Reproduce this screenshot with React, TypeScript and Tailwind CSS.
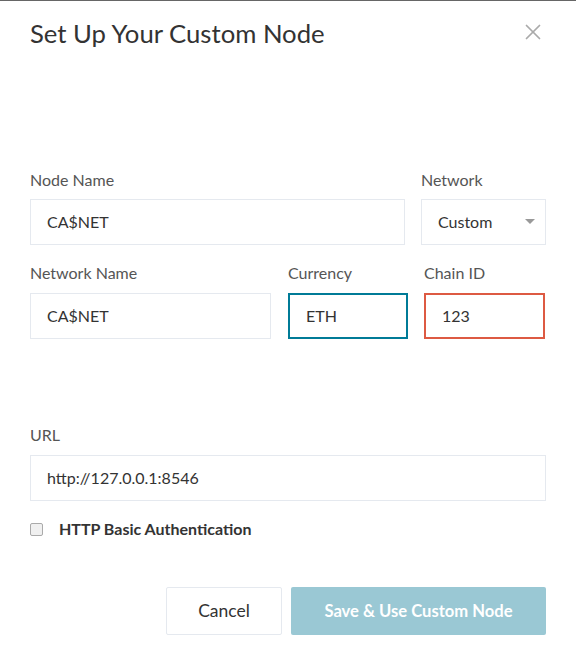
import { X } from "lucide-react"

export default function App() {
  const inputBase =
    "h-[46px] w-full bg-white px-[16px] text-[16px] text-[#333] outline-none flex items-center"
  const labelCls = "block text-[16px] leading-[20px] text-[#555]"

  return (
    <div className="w-[576px] h-[648px] bg-white border-t border-[#666] font-['Lato','Liberation_Sans',sans-serif] text-[#333] overflow-hidden">
      {/* HEADER */}
      <div className="flex items-center justify-between pl-[30px] pr-[30px] pt-[13px] h-[50px]">
        <h1 className="text-[25.7px] leading-[34px] font-normal text-[#333]">Set Up Your Custom Node</h1>
        <X size={26} strokeWidth={1.6} className="text-[#aaa] -mt-[2px]" />
      </div>

      {/* FORM */}
      <div className="px-[30px] pt-[119px]">
        {/* Row 1 */}
        <div className="grid grid-cols-[375px_125px] gap-x-[16px]">
          <div>
            <label className={`${labelCls} mb-[9px]`}>Node Name</label>
            <div className={`${inputBase} border border-[#e5e9ef]`}>CA$NET</div>
          </div>
          <div>
            <label className={`${labelCls} mb-[9px]`}>Network</label>
            <div className={`${inputBase} border border-[#e5e9ef] justify-between pr-[10px]`}>
              <span>Custom</span>
              <svg width="10" height="6" viewBox="0 0 10 6">
                <path d="M0 0 L10 0 L5 5 Z" fill="#999" />
              </svg>
            </div>
          </div>
        </div>

        {/* Row 2 */}
        <div className="grid grid-cols-[241px_121px_121px] gap-x-[16px] mt-[18px]">
          <div>
            <label className={`${labelCls} mb-[10px]`}>Network Name</label>
            <div className={`${inputBase} border border-[#e5e9ef]`}>CA$NET</div>
          </div>
          <div className="ml-[1px]">
            <label className={`${labelCls} mb-[10px]`}>Currency</label>
            <div className={`${inputBase} border-2 border-[#007b97]`}>ETH</div>
          </div>
          <div>
            <label className={`${labelCls} mb-[10px]`}>Chain ID</label>
            <div className={`${inputBase} border-2 border-[#dd5a43]`}>123</div>
          </div>
        </div>

        {/* URL */}
        <div className="mt-[86px]">
          <label className={`${labelCls} mb-[10px]`}>URL</label>
          <div className={`${inputBase} border border-[#e5e9ef]`}>http://127.0.0.1:8546</div>
        </div>

        {/* Checkbox */}
        <div className="flex items-center mt-[18px] h-[20px]">
          <span className="w-[13px] h-[13px] rounded-[2px] border border-[#aaa] bg-[#f0f0f0]" />
          <span className="ml-[16px] text-[16px] font-bold text-[#333]">HTTP Basic Authentication</span>
        </div>

        {/* Buttons */}
        <div className="flex justify-end gap-[9px] mt-[48px]">
          <button className="w-[116px] h-[48px] border border-[#e5e9ef] bg-white text-[17.5px] text-[#333] rounded-[2px]">
            Cancel
          </button>
          <button className="w-[255px] h-[48px] bg-[#9ac8d4] text-white text-[16.6px] font-bold rounded-[2px]">
            Save &amp; Use Custom Node
          </button>
        </div>
      </div>
    </div>
  )
}
